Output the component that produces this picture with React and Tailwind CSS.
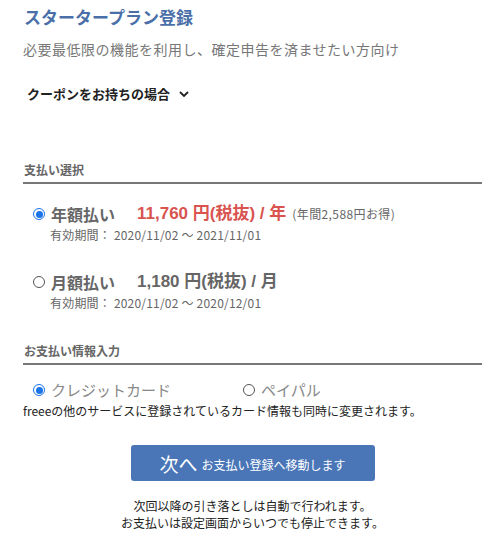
import React from 'react';

const Radio = ({ checked }) => (
  <span
    className={
      'inline-flex items-center justify-center w-[12px] h-[12px] rounded-full border shrink-0 ' +
      (checked ? 'border-[#1a73e8]' : 'border-[#555]')
    }
  >
    {checked && <span className="w-[7px] h-[7px] rounded-full bg-[#1a73e8]" />}
  </span>
);

const App = () => {
  return (
    <div className="w-[501px] h-[536px] bg-white text-[#333] font-['Noto_Sans_CJK_JP','Noto_Sans',sans-serif] pl-[23px] pr-[19px] pt-[5px]">
      {/* Header */}
      <h1 className="text-[17px] font-bold text-[#4a6fa8] leading-[24px] pl-[1px]">スタータープラン登録</h1>
      <p className="mt-[10px] text-[14px] text-[#777] leading-[20px] tracking-[0.5px]">
        必要最低限の機能を利用し、確定申告を済ませたい方向け
      </p>
      <button className="mt-[26px] ml-[4px] flex items-center gap-[8px] text-[13px] font-bold text-[#222] leading-[18px]">
        クーポンをお持ちの場合
        <svg width="12" height="12" viewBox="0 0 12 12" fill="none" stroke="#222" strokeWidth="1.8">
          <path d="M2 4l4 4 4-4" />
        </svg>
      </button>

      {/* 支払い選択 */}
      <div className="mt-[58px] pb-[3px] border-b-2 border-[#777] text-[12px] font-bold text-[#666] leading-[18px] pl-[1px]">
        支払い選択
      </div>
      <div className="mt-[18px] pl-[10px]">
        <div className="flex items-center gap-[6px] leading-[24px]">
          <Radio checked />
          <span className="text-[16px] font-bold text-[#666] w-[80px]">年額払い</span>
          <span className="text-[17px] font-bold text-[#d9534f] font-['Liberation_Sans','Noto_Sans_CJK_JP',sans-serif]">
            11,760 円(税抜) / 年
          </span>
          <span className="text-[12px] text-[#666] tracking-[0.4px]">(年間2,588円お得)</span>
        </div>
        <div className="pl-[17px] text-[12px] text-[#666] leading-[18px] tracking-[0.2px]">
          有効期間： 2020/11/02 〜 2021/11/01
        </div>
        <div className="mt-[26px] flex items-center gap-[6px] leading-[24px]">
          <Radio />
          <span className="text-[16px] font-bold text-[#666] w-[80px]">月額払い</span>
          <span className="text-[17px] font-bold text-[#666] font-['Liberation_Sans','Noto_Sans_CJK_JP',sans-serif]">
            1,180 円(税抜) / 月
          </span>
        </div>
        <div className="pl-[17px] text-[12px] text-[#666] leading-[18px] tracking-[0.2px]">
          有効期間： 2020/11/02 〜 2020/12/01
        </div>
      </div>

      {/* お支払い情報入力 */}
      <div className="mt-[30px] pb-[3px] border-b-2 border-[#777] text-[12px] font-bold text-[#666] leading-[18px] pl-[1px]">
        お支払い情報入力
      </div>
      <div className="mt-[14px] pl-[10px] flex items-center text-[15px] text-[#888] leading-[22px]">
        <label className="flex items-center gap-[6px] w-[210px]">
          <Radio checked />
          クレジットカード
        </label>
        <label className="flex items-center gap-[6px]">
          <Radio />
          ペイパル
        </label>
      </div>
      <p className="mt-[1px] text-[12px] text-[#222] leading-[18px]">
        freeeの他のサービスに登録されているカード情報も同時に変更されます。
      </p>

      {/* Next */}
      <div className="mt-[25px] flex justify-center">
        <button className="w-[244px] h-[36px] rounded-[3px] bg-[#4a76b8] text-white flex items-center justify-center gap-[4px]">
          <span className="text-[19px] leading-none">次へ</span>
          <span className="text-[12px] leading-none mt-[3px]">お支払い登録へ移動します</span>
        </button>
      </div>
      <div className="mt-[16px] text-center text-[12px] text-[#222] leading-[17px]">
        <p>次回以降の引き落としは自動で行われます。</p>
        <p>お支払いは設定画面からいつでも停止できます。</p>
      </div>
    </div>
  );
};

export default App;
